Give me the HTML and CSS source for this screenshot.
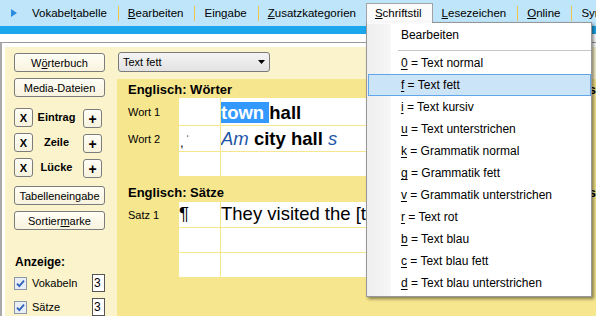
FILE: index.html
```html
<!DOCTYPE html>
<html lang="de">
<head>
<meta charset="utf-8">
<title>Schriftstil</title>
<link rel="stylesheet" href="styles.css">
</head>
<body>
<div class="menubar">
  <svg class="mb-arrow" width="6" height="8" viewBox="0 0 6 8"><path d="M0 0L6 4L0 8Z" fill="#2b8be0"/></svg>
  <div class="mi">Vokabel<u>t</u>abelle</div><span class="sep"></span>
  <div class="mi"><u>B</u>earbeiten</div><span class="sep"></span>
  <div class="mi">Ein<u>g</u>abe</div><span class="sep"></span>
  <div class="mi"><u>Z</u>usatzkategorien</div>
  <div class="mi active"><u>S</u>chriftstil
    <div class="dd">
      <div class="dd-item">Bearbeiten</div>
      <div class="dd-sep"></div>
      <div class="dd-item"><u>0</u> = Text normal</div>
      <div class="dd-item hot"><u>f</u> = Text fett</div>
      <div class="dd-item"><u>i</u> = Text kursiv</div>
      <div class="dd-item"><u>u</u> = Text unterstrichen</div>
      <div class="dd-item"><u>k</u> = Grammatik normal</div>
      <div class="dd-item"><u>g</u> = Grammatik fett</div>
      <div class="dd-item"><u>v</u> = Grammatik unterstrichen</div>
      <div class="dd-item"><u>r</u> = Text rot</div>
      <div class="dd-item"><u>b</u> = Text blau</div>
      <div class="dd-item"><u>c</u> = Text blau fett</div>
      <div class="dd-item"><u>d</u> = Text blau unterstrichen</div>
    </div>
  </div>
  <div class="mi"><u>L</u>esezeichen</div><span class="sep"></span>
  <div class="mi"><u>O</u>nline</div><span class="sep"></span>
  <div class="mi">Synonyme</div>
</div>
<div class="strip"></div>
<div class="gap"></div>
<div class="frame">
  <div class="inner">
    <aside class="left">
      <button class="btn">W<u>ö</u>rterbuch</button>
      <button class="btn">Media-Dateien</button>
      <div class="edit-row first"><button class="sq">X</button><span class="rl">Eintrag</span><button class="sq plus">+</button></div>
      <div class="edit-row"><button class="sq">X</button><span class="rl">Zeile</span><button class="sq plus">+</button></div>
      <div class="edit-row"><button class="sq">X</button><span class="rl">Lücke</span><button class="sq plus">+</button></div>
      <button class="btn after-rows">Tabelleneingabe</button>
      <button class="btn">Sortier<u>m</u>arke</button>
      <div class="anz">Anzeige:</div>
      <div class="chk first">
        <svg class="cb" width="13" height="13" viewBox="0 0 13 13"><rect x="0.5" y="0.5" width="12" height="12" fill="#e9eef6" stroke="#8d98a6"/><path d="M3 6.6L5.3 9.2L10 3.6" fill="none" stroke="#2d62b8" stroke-width="1.8"/></svg>
        <span class="cl">Vokabeln</span><span class="num">3</span>
      </div>
      <div class="chk">
        <svg class="cb" width="13" height="13" viewBox="0 0 13 13"><rect x="0.5" y="0.5" width="12" height="12" fill="#e9eef6" stroke="#8d98a6"/><path d="M3 6.6L5.3 9.2L10 3.6" fill="none" stroke="#2d62b8" stroke-width="1.8"/></svg>
        <span class="cl">Sätze</span><span class="num">3</span>
      </div>
    </aside>
    <main class="content">
      <div class="combo"><span>Text fett</span><svg width="7" height="4" viewBox="0 0 7 4"><path d="M0 0H7L3.5 4Z" fill="#000"/></svg></div>
      <section class="sheet">
        <div class="sec-head"><span>Englisch: Wörter</span><span class="far">s</span></div>
        <div class="grid words">
          <div class="lab">Wort 1</div><div class="cell"></div><div class="cell big"><span><b><span class="sel">town </span>hall</b></span></div>
          <div class="lab">Wort 2</div><div class="cell tiny">,<span class="tick">ˈ</span></div><div class="cell big"><span><i class="blue">Am</i> <b>city hall</b> <i class="blue">s</i></span></div>
          <div class="lab"></div><div class="cell"></div><div class="cell"></div>
        </div>
        <div class="sec-head sec2"><span>Englisch: Sätze</span><span class="far">s</span></div>
        <div class="grid sents">
          <div class="lab">Satz 1</div><div class="cell big pil"><span>¶</span></div><div class="cell big"><span>They visited the [town hall]</span></div>
          <div class="lab"></div><div class="cell"></div><div class="cell"></div>
          <div class="lab"></div><div class="cell"></div><div class="cell"></div>
        </div>
      </section>
    </main>
  </div>
</div>
</body>
</html>
```

FILE: styles.css
```css
* { box-sizing: border-box; margin: 0; padding: 0; }
html, body { width: 596px; height: 316px; overflow: hidden; background: #fff; }
body { font-family: "Liberation Sans", Arial, sans-serif; color: #000; position: relative; }

/* menu bar */
.menubar {
  height: 26px; background: #bee5fa; display: flex; align-items: center;
  padding-left: 11px; font-size: 11.5px; white-space: nowrap; position: relative; z-index: 3;
}
.mb-arrow { margin-right: 6px; flex: none; }
.mi { padding: 0 11px 0 9px; line-height: 14px; flex: none; }
.mi u { text-underline-offset: 1px; }
.sep { width: 1px; height: 15px; background: #efc54c; flex: none; }
.mi.active {
  align-self: flex-start; margin-top: 3px; height: 20px; position: relative;
  border: 1px solid #a3a3a3; border-bottom: none; background: #fbfbfb;
  padding: 2px 10px 0 8px; margin-left: -1px;
}
.mi.active::after {
  content: ""; position: absolute; left: 0; right: 0; top: 18px; height: 2px;
  background: #fbfbfb; z-index: 2;
}

/* dropdown */
.dd {
  position: absolute; top: 18px; left: -1px; width: 226px; z-index: 1;
  border: 1px solid #979797;
  background: linear-gradient(to right, #eeeeee 0, #f6f6f6 23px, #fcfcfc 24px, #fff 24px);
  padding: 1px 0 2px 0; box-shadow: 2px 2px 3px rgba(0,0,0,.45);
  font-size: 12px; color: #000;
}
.dd-item { height: 22px; line-height: 20px; margin-left: 1px; padding-left: 32px; border: 1px solid transparent; }
.dd-item u { text-underline-offset: 2px; }
.dd-item.hot { background: #cce4f7; border-color: #62a6ea; }
.dd-sep { height: 6px; margin-left: 31px; background: linear-gradient(#c6c6c6, #c6c6c6) 0 4px / 100% 1px no-repeat; }

/* top strips */
.strip { height: 8px; background: #1aa7ec; }
.gap { height: 8px; }
.frame { height: 274px; border-top: 1px solid #9c9c9c; border-left: 2px solid #a9a9a9; padding: 4px 0 0 3px; }
.inner { display: flex; height: 100%; background: #faf3cc; }

/* left panel */
.left { width: 108px; flex: none; padding: 6px 0 0 9px; display: flex; flex-direction: column; align-items: flex-start; }
.btn, .sq {
  font-family: "Liberation Sans", Arial, sans-serif; color: #000; cursor: default;
  border: 1px solid #7c7c7c; border-radius: 3px;
  background: linear-gradient(#fffef6, #f8f3de);
}
.btn { width: 91px; height: 19px; font-size: 11px; margin-bottom: 6px; line-height: 16px; }
.btn u { text-underline-offset: 1px; }
.edit-row { display: flex; align-items: flex-start; width: 88px; height: 19px; margin-bottom: 6px; }
.edit-row.first { margin-top: 5px; }
.sq { width: 19px; height: 19px; font-size: 11px; font-weight: bold; flex: none; }
.sq.plus { margin-top: 1px; font-size: 14px; line-height: 14px; }
.rl { flex: 1; text-align: center; font-size: 11px; font-weight: bold; line-height: 19px; padding-right: 3px; }
.btn.after-rows { margin-top: 3px; }
.anz { font-size: 12px; font-weight: bold; line-height: 14px; margin-top: 19px; padding-left: 1px; }
.chk { display: flex; align-items: center; width: 91px; height: 18px; margin-top: 6px; font-size: 11px; }
.chk.first { margin-top: 5px; }
.cb { flex: none; }
.cl { margin-left: 5px; }
.num { margin-left: auto; width: 13px; height: 18px; background: #fff; border: 1px solid #555; font-size: 12px; line-height: 16px; padding-left: 1px; }

/* content */
.content { flex: 1; min-width: 0; padding: 5px 0 0 4px; display: flex; flex-direction: column; }
.combo {
  width: 152px; height: 20px; margin: 0 0 7px 1px; flex: none;
  border: 1px solid #7a7a7a; border-radius: 3px;
  background: linear-gradient(#f4f4f4, #e2e2e2);
  display: flex; align-items: center; justify-content: space-between;
  padding: 0 4px; font-size: 11px;
}
.sheet { flex: 1; background: #f6e68e; overflow: hidden; }
.sec-head {
  height: 19px; display: flex; align-items: flex-end; justify-content: space-between;
  padding: 0 0 1px 11px; font-size: 13px; font-weight: bold; line-height: 15px; white-space: nowrap;
}
.sec-head.sec2 { height: 26px; padding-bottom: 2px; }
.grid { display: grid; grid-template-columns: 61px 41px 1fr; column-gap: 1px; row-gap: 1px; margin-right: 14px; }
.words { grid-template-rows: 27px 25px 24px; }
.sents { grid-template-rows: 25px 24px 24px; }
.lab { font-size: 11px; padding-left: 11px; display: flex; align-items: center; }
.cell { background: #fff; overflow: hidden; white-space: nowrap; }
.cell.big { font-size: 18.5px; display: flex; align-items: flex-end; padding-bottom: 1px; }
.sents .cell.big { padding-bottom: 2px; }
.cell.tiny { font-size: 13px; line-height: 14px; padding: 6px 0 0 1px; }
.tick { font-size: 11px; margin-left: 2px; vertical-align: 4px; }
.sel { background: #3399ff; color: #fff; }
.blue { color: #1d55a6; }
```
